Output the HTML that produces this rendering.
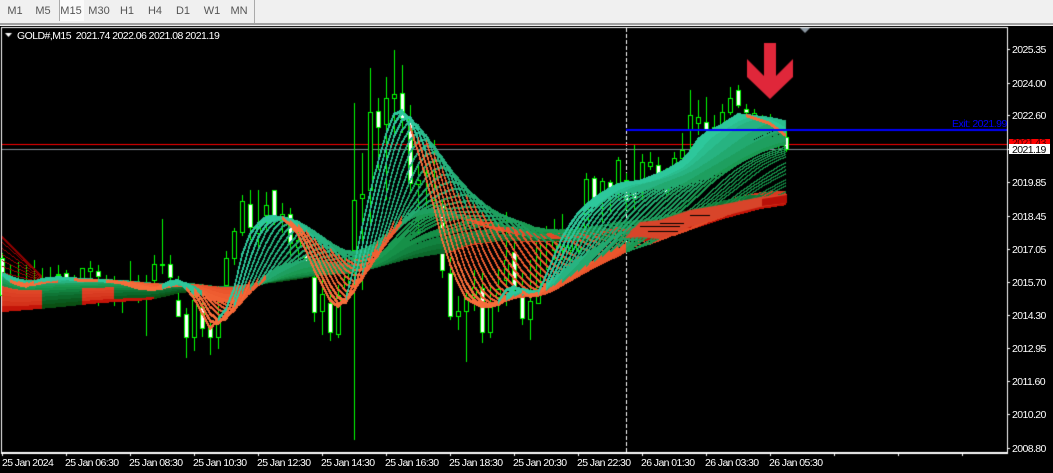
<!DOCTYPE html>
<html><head><meta charset="utf-8"><style>
html,body{margin:0;padding:0;background:#000;width:1053px;height:473px;overflow:hidden}
#w{position:relative;width:1053px;height:473px;overflow:hidden;font-family:"Liberation Sans",sans-serif;background:#000}
canvas{position:absolute;left:0;top:0}
.t{position:absolute;white-space:pre;color:#fff;font-size:10.5px;line-height:12px;letter-spacing:-.6px}
.m{position:absolute;top:5px;width:28px;text-align:center;color:#555;font-size:11px;line-height:12px}
.b{position:absolute}
</style></head><body><div id="w">
<canvas id="c" width="1053" height="473"></canvas>
<div class="b" style="left:0;top:0;width:1053px;height:23px;background:#f0f0f0"></div>
<div class="b" style="left:0;top:23px;width:1053px;height:2px;background:#a0a0a0"></div>
<div class="b" style="left:0;top:25px;width:1053px;height:1px;background:#f0f0f0"></div>
<div class="b" style="left:60px;top:0;width:24px;height:21px;background:#fafafa"></div>
<div class="b" style="left:59px;top:0;width:1px;height:21px;background:#aaa"></div>
<div class="b" style="left:254px;top:0;width:1px;height:23px;background:#aaa"></div>
<div class="m" style="left:1px">M1</div><div class="m" style="left:29px">M5</div><div class="m" style="left:57px">M15</div><div class="m" style="left:85px">M30</div><div class="m" style="left:113px">H1</div><div class="m" style="left:141px">H4</div><div class="m" style="left:169px">D1</div><div class="m" style="left:198px">W1</div><div class="m" style="left:225px">MN</div>
<div class="t" style="left:17px;top:30px;letter-spacing:-.55px">GOLD#,M15  2021.74 2022.06 2021.08 2021.19</div>
<div class="t" style="left:952px;top:118px;color:#0000ff;letter-spacing:-.5px">Exit: 2021.99</div>
<div class="t" style="left:1012px;top:44px">2025.35</div>
<div class="t" style="left:1012px;top:78px">2024.00</div>
<div class="t" style="left:1012px;top:110px">2022.60</div>
<div class="b" style="left:1009px;top:139px;width:41px;height:6px;background:#ff0000;overflow:hidden"><div class="t" style="left:3px;top:-2px;color:#400">2021.43</div></div>
<div class="b" style="left:1009px;top:144px;width:41px;height:10px;background:#fff"></div>
<div class="t" style="left:1012px;top:144px;color:#000">2021.19</div>
<div class="t" style="left:1012px;top:177px">2019.85</div>
<div class="t" style="left:1012px;top:211px">2018.45</div>
<div class="t" style="left:1012px;top:244px">2017.05</div>
<div class="t" style="left:1012px;top:277px">2015.70</div>
<div class="t" style="left:1012px;top:310px">2014.30</div>
<div class="t" style="left:1012px;top:343px">2012.95</div>
<div class="t" style="left:1012px;top:376px">2011.60</div>
<div class="t" style="left:1012px;top:409px">2010.20</div>
<div class="t" style="left:1012px;top:443px">2008.80</div>
<div class="t" style="left:2px;top:457px">25 Jan 2024</div>
<div class="t" style="left:65px;top:457px">25 Jan 06:30</div>
<div class="t" style="left:129px;top:457px">25 Jan 08:30</div>
<div class="t" style="left:193px;top:457px">25 Jan 10:30</div>
<div class="t" style="left:257px;top:457px">25 Jan 12:30</div>
<div class="t" style="left:321px;top:457px">25 Jan 14:30</div>
<div class="t" style="left:385px;top:457px">25 Jan 16:30</div>
<div class="t" style="left:449px;top:457px">25 Jan 18:30</div>
<div class="t" style="left:513px;top:457px">25 Jan 20:30</div>
<div class="t" style="left:577px;top:457px">25 Jan 22:30</div>
<div class="t" style="left:641px;top:457px">26 Jan 01:30</div>
<div class="t" style="left:705px;top:457px">26 Jan 03:30</div>
<div class="t" style="left:769px;top:457px">26 Jan 05:30</div>
</div>
<script>
var g=document.getElementById('c').getContext('2d');
function R(x,y,w,h,c){g.fillStyle=c;g.fillRect(x,y,w,h)}
function P(pts,c){g.fillStyle=c;g.beginPath();pts.forEach(function(p,i){i?g.lineTo(p[0],p[1]):g.moveTo(p[0],p[1])});g.closePath();g.fill()}
R(0,0,1053,473,'#000');
R(1,27,1007,1,'#fff');R(1,27,1,427,'#fff');R(1007,27,1,427,'#fff');R(1,452,1007,2,'#fff');
[49,83,115,149,182,216,249,282,315,348,381,414,448].forEach(function(y){R(1008,y,2,1,'#fff')});
for(var x=2;x<1007;x+=64)R(x,454,1,2,'#fff');
g.fillStyle='#fff';g.beginPath();g.moveTo(5,33);g.lineTo(12,33);g.lineTo(8.5,37);g.closePath();g.fill();
g.fillStyle='#8a96a0';g.beginPath();g.moveTo(800,28);g.lineTo(810,28);g.lineTo(805,33);g.closePath();g.fill();
for(var y=28;y<452;y+=6)R(626,y,1,4,'#fff');
R(2,144,1005,1,'#ff0000');R(2,149,1005,1,'#808890');
var C=[[3,253,310,258,295,1],[11,265,310,280,290,0],[19,262,300,280,285,0],[27,265,300,280,285,0],[35,260,300,280,285,0],[43,268,300,285,288,0],[51,267,300,285,288,0],[59,265,300,274,275,0],[67,270,305,273,293,1],[75,275,300,285,288,0],[83,268,300,268,280,0],[91,261,298,268,271,0],[99,265,306,271,276,1],[107,275,300,280,285,0],[115,276,306,285,290,0],[123,280,313,290,295,0],[131,261,300,285,290,0],[139,275,303,285,290,0],[147,275,336,290,295,0],[155,255,290,264,280,0],[163,219,274,264,265,0],[171,255,280,264,277,1],[179,276,317,300,316,1],[187,308,358,314,337,1],[195,290,351,300,337,0],[203,300,337,307,328,1],[211,320,355,328,337,1],[219,300,349,322,337,0],[227,251,300,258,285,0],[235,228,265,231,258,0],[243,195,236,201,232,0],[251,190,240,204,227,1],[259,190,247,227,233,0],[267,192,230,205,215,0],[275,190,225,190,218,1],[283,203,233,214,220,0],[291,208,258,214,243,1],[299,225,258,240,247,0],[307,242,270,255,262,1],[315,270,322,277,312,1],[323,280,335,294,311,0],[331,290,341,303,332,1],[339,285,338,295,334,0],[347,252,300,255,290,0],[355,103,440,200,250,0],[363,153,290,194,198,0],[371,68,230,112,190,0],[379,98,170,111,127,1],[387,77,200,98,124,0],[395,50,137,94,98,0],[403,65,133,93,118,1],[411,105,193,119,183,1],[419,165,235,180,184,0],[427,165,210,172,173,0],[435,140,205,200,205,0],[443,200,278,204,270,1],[451,257,320,273,316,1],[459,296,330,311,316,0],[467,290,362,297,311,0],[475,270,311,287,297,0],[483,270,343,288,332,1],[491,285,338,305,332,0],[499,268,312,289,297,0],[507,212,306,260,280,0],[515,240,296,252,287,1],[523,270,325,297,318,1],[531,260,340,301,319,0],[539,227,303,232,303,0],[547,226,270,232,235,1],[555,219,260,240,250,0],[563,214,260,240,250,0],[571,230,260,240,250,0],[579,225,270,240,250,0],[587,173,240,179,230,0],[595,176,205,178,197,1],[603,178,240,181,197,0],[611,180,215,182,188,1],[619,157,200,160,183,0],[627,173,210,180,200,1],[635,145,212,188,198,1],[643,154,200,162,190,0],[651,152,170,162,166,0],[659,157,180,165,173,1],[667,168,195,171,192,1],[675,152,175,158,172,0],[683,133,165,150,158,0],[691,90,150,115,130,0],[699,100,135,117,123,0],[707,97,150,122,130,1],[715,115,145,127,143,0],[723,104,130,112,128,0],[731,87,115,98,112,0],[739,85,108,90,105,1],[747,104,120,109,112,1],[755,109,125,113,116,0],[763,115,125,118,120,0],[771,114,135,120,125,0],[779,125,148,130,135,0],[787,130,152,137,149,1]];
C.forEach(function(c){var k=Math.round((c[0]-2)/8),x=2+8*k;
 R(x,c[1],1,c[2]-c[1],'#00ff00');
 R(x-2,c[3],5,c[4]-c[3]+1,'#00ff00');
 if(c[4]-c[3]>1)R(x-1,c[3]+1,3,c[4]-c[3]-1,c[5]?'#fff':'#000');
});
for(var i=0;i<7;i++){for(var x=2;x<42;x++){var y0=236+i*6,y1=276+i*1;var y=y0+(y1-y0)*(x-2)/40;R(x,Math.round(y),1,i==0?3:1,i==0?'#8b0000':'#a00000')}}
var F=[[2,272],[12,281],[25,285],[40,278],[60,276],[80,279],[100,279],[120,281],[140,287],[155,288],[170,280],[180,279],[195,298],[210,327],[225,310],[235,285],[245,240],[255,225],[268,214],[285,217],[300,235],[315,270],[335,308],[348,295],[360,235],[372,183],[385,135],[396,108],[405,110],[415,140],[430,190],[445,250],[455,275],[465,296],[480,305],[495,305],[510,283],[525,292],[535,298],[548,270],[560,240],[575,215],[590,200],[605,190],[620,182],[640,180],[665,170],[685,158],[700,135],[720,125],[740,112],[755,117],[770,122],[787,135]];
var S=[[2,310],[50,306],[100,301],[150,298],[180,291],[210,288],[250,284],[300,277],[350,268],[400,258],[450,250],[470,240],[500,236],[540,238],[580,240],[620,238],[650,239],[693,227],[723,217],[760,207],[787,203]];
function L(P,x){if(x<=P[0][0])return P[0][1];for(var i=1;i<P.length;i++)if(x<=P[i][0]){var a=P[i-1],b=P[i];return a[1]+(b[1]-a[1])*(x-a[0])/(b[0]-a[0])}return P[P.length-1][1]}
var K=99,N=64,E=[],fa=[],sa=[];
for(var k=0;k<K;k++){fa[k]=L(F,2+8*k);sa[k]=L(S,2+8*k)}
for(var i=0;i<N;i++){var w=Math.round(1+69*Math.pow(i/(N-1),1.5)),e=[];
 for(var k=0;k<K;k++){var s=0,m=0;for(var q=Math.max(0,k-w+1);q<=k;q++){s+=fa[q];m++}e[k]=s/m}
 E.push(e)}
var Y=[];
for(var i=0;i<N;i++){var c=Math.pow(i/(N-1),2),e=[];for(var k=0;k<K;k++)e[k]=E[i][k]+(sa[k]-E[N-1][k])*c;Y.push(e)}
var GC=['#2dc79b','#2abd8e','#27b381','#22a96f','#1e9f5f','#1a9a52','#169048','#128340','#0f7535','#0c682a','#0a5a1e','#0a4f12'];
var OC=['#f66d3a','#f46636','#f06033','#ee5c30','#ea562c','#e6502a','#e24a28','#df4526','#dc4024','#d83a20','#d4321a','#c41408'];
for(var i=N-1;i>=0;i--){
 var ci=Math.min(11,Math.floor(i/N*12));
 for(var k=0;k<K-1;k++){
  var x0=2+8*k;
  var up=i<N-6?Y[i][k]<Y[i+6][k]:Y[i-6][k]<Y[i][k];
  if(i>N*0.55){
   if(x0<35)up=false;else if(x0<75)up=true;else if(x0<110)up=false;else if(x0<147)up=i<N-5;
   else if(x0>=620&&i>=N-16)up=false;
  }
  if(x0>=620&&i<N*.5)up=!(x0>=745&&i<2);
  if(x0>=250&&x0<450&&i>=N*.3)up=true;
  var col=up?GC[ci]:OC[ci];
  var th=i<6?3:((i>N*.45&&i<N*.68&&x0>=600)?1:2);
  var fill=(i>N*.7&&i<N-1)||(x0>=650&&i<N*.2)||(x0>=690&&i<N*.3);
  for(var j=0;j<8;j++){
   var fr=j/8,a=Y[i][k]+(Y[i][k+1]-Y[i][k])*fr,b=Y[i][k]+(Y[i][k+1]-Y[i][k])*(j+1)/8;
   var t=Math.round(Math.min(a,b)),h=Math.round(Math.max(a,b))-t+th;
   if(fill){var n=Y[i+1][k]+(Y[i+1][k+1]-Y[i+1][k])*fr;
    var e=Math.round(n)+1;if(e>t+h)h=e-t;if(n<t){h+=t-Math.round(n);t=Math.round(n)}}
   R(x0+j,t,1,h,col);
  }
 }
}
// red lower band on the right side of the ribbon
P([[625,238],[640,222],[660,220],[690,210],[720,205],[760,197],[787,194],[787,203],[760,207],[720,217],[690,227],[660,239],[640,237]],'#d8452a');
P([[762,199],[787,195],[787,203],[762,206]],'#b81008');
[[640,226,40],[648,231,30],[660,223,24],[690,215,20]].forEach(function(s){R(s[0],s[1],s[2],1,'#000')});
R(626,129,381,2,'#0000ff');
P([[764,43],[776,43],[776,76],[793,59],[793,77],[770,99],[747,77],[747,59],[764,76]],'#e0273a');
</script>
</body></html>
